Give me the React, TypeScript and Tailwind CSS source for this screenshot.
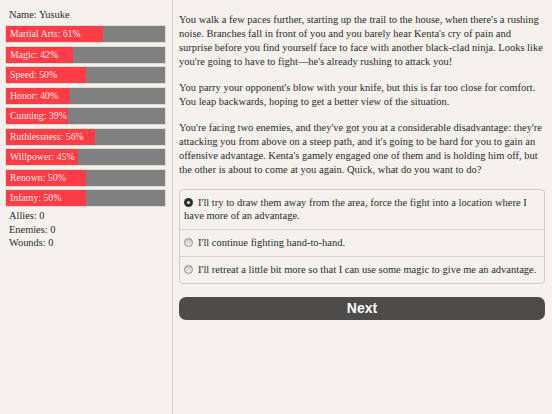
const stats = [
  { label: "Martial Arts", value: 61 },
  { label: "Magic", value: 42 },
  { label: "Speed", value: 50 },
  { label: "Honor", value: 40 },
  { label: "Cunning", value: 39 },
  { label: "Ruthlessness", value: 56 },
  { label: "Willpower", value: 45 },
  { label: "Renown", value: 50 },
  { label: "Infamy", value: 50 },
];

const choices = [
  "I'll try to draw them away from the area, force the fight into a location where I have more of an advantage.",
  "I'll continue fighting hand-to-hand.",
  "I'll retreat a little bit more so that I can use some magic to give me an advantage.",
];

function Radio({ checked }: { checked: boolean }) {
  return checked ? (
    <span className="inline-block align-[-1px] w-[9px] h-[9px] rounded-full bg-[#2f2f2f] mr-[5px] relative">
      <span className="absolute left-[3px] top-[3px] w-[3px] h-[3px] rounded-full bg-[#e8e8e8]" />
    </span>
  ) : (
    <span className="inline-block align-[-1px] w-[9px] h-[9px] rounded-full border border-[#8d8d8d] bg-gradient-to-b from-[#c9c9c9] to-[#f4f4f4] mr-[5px]" />
  );
}

export default function App() {
  return (
    <div className="w-[552px] h-[414px] bg-[#f5f2ed] flex font-['Liberation_Serif',serif] text-[#2b2b2b] overflow-hidden">
      {/* Sidebar */}
      <div className="w-[173px] shrink-0 border-r border-[#d4d1cc] pl-[5px] pr-[6px] pt-[8px] text-[10.4px] leading-[14px]">
        <p className="pl-[4px] mb-[3px]">Name: Yusuke</p>
        <div className="flex flex-col gap-[2.5px]">
          {stats.map((s) => (
            <div
              key={s.label}
              className="relative h-[18px] bg-[#808080] border border-[#dedbd6]"
            >
              <div
                className="absolute inset-y-0 left-0 bg-[#ff3d47]"
                style={{ width: `${s.value}%` }}
              />
              <span className="relative block pl-[4px] leading-[16px] text-[9.8px] text-[#fde4e4]">
                {s.label}: {s.value}%
              </span>
            </div>
          ))}
        </div>
        <div className="pl-[4px] pt-[2px] leading-[13.5px]">
          <p>Allies: 0</p>
          <p>Enemies: 0</p>
          <p>Wounds: 0</p>
        </div>
      </div>

      {/* Story */}
      <div className="flex-1 pl-[6px] pr-[7px] pt-[13px] text-[10.5px] leading-[13.9px]">
        <p className="mb-[12.5px]">
          You walk a few paces further, starting up the trail to the house, when there's a rushing
          noise. Branches fall in front of you and you barely hear Kenta's cry of pain and surprise
          before you find yourself face to face with another black-clad ninja. Looks like you're
          going to have to fight—he's already rushing to attack you!
        </p>
        <p className="mb-[12.5px]">
          You parry your opponent's blow with your knife, but this is far too close for comfort. You
          leap backwards, hoping to get a better view of the situation.
        </p>
        <p className="mb-[11.5px]">
          You're facing two enemies, and they've got you at a considerable disadvantage: they're
          attacking you from above on a steep path, and it's going to be hard for you to gain an
          offensive advantage. Kenta's gamely engaged one of them and is holding him off, but the
          other is about to come at you again. Quick, what do you want to do?
        </p>

        <div className="border border-[#cfccc7] rounded-[4px]">
          {choices.map((c, i) => (
            <div
              key={i}
              className={`px-[4px] py-[6px] ${i > 0 ? "border-t border-[#d6d3ce]" : ""}`}
            >
              <Radio checked={i === 0} />
              {c}
            </div>
          ))}
        </div>

        <button className="mt-[13px] w-full h-[23px] rounded-[7px] bg-[#4d4c4a] text-white font-['Liberation_Sans',sans-serif] font-bold text-[14px] leading-[23px]">
          Next
        </button>
      </div>
    </div>
  );
}
